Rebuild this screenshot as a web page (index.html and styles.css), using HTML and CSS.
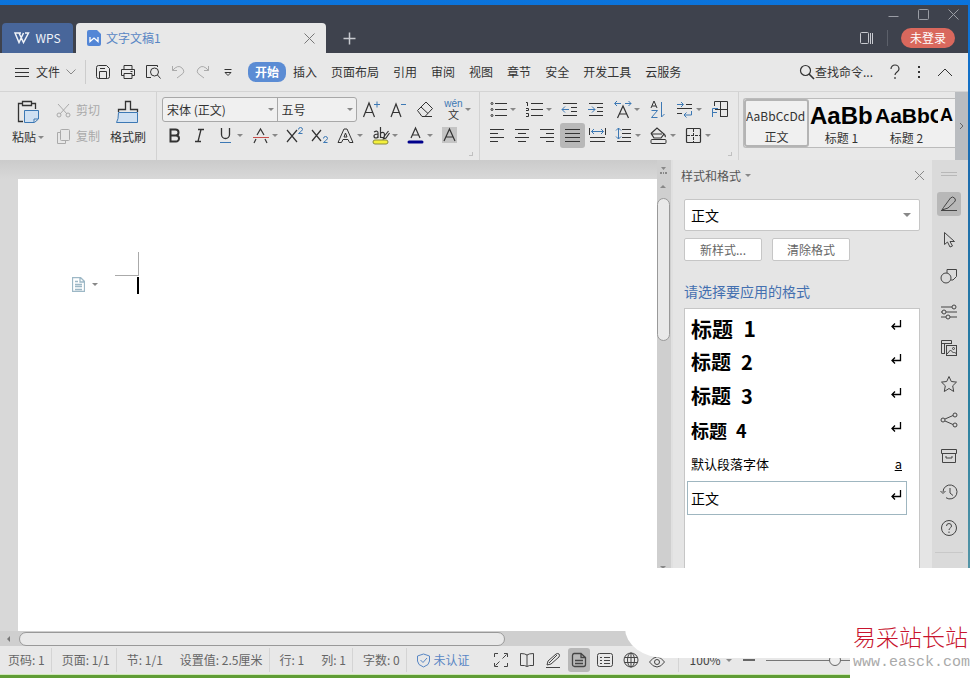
FILE: index.html
```html
<!DOCTYPE html>
<html lang="zh-CN">
<head>
    <meta charset="UTF-8">
    <meta name="viewport" content="width=device-width, initial-scale=1.0">
    <title>文字文稿1 - WPS</title>
    <link rel="stylesheet" href="styles.css">
</head>
<body>
    <div class="window">
        <!-- Title bar -->
        <header class="title-bar">
            <button class="home-tab">
                <svg width="16" height="12" viewBox="0 0 16 12"><path d="M5 1H1l4 9.500L9.500 1M7 1h-2l4.500 9.500L14.500 1H11" stroke-width="1.5"/></svg>
                WPS
            </button>
            <div class="doc-tab">
                <svg width="14" height="16" viewBox="0 0 14 16"><path class="fill-blue" d="M2 0h8l4 4v10a2 2 0 0 1-2 2H2a2 2 0 0 1-2-2V2a2 2 0 0 1 2-2z"/><path class="white" d="M3 7v4.500l4-3.500 4 3.500V7" stroke-width="1.3"/></svg>
                <span>文字文稿1</span>
                <button class="tab-close" aria-label="关闭"><svg width="11" height="11" viewBox="0 0 11 11"><path d="M.5.5l10 10M10.500.5l-10 10"/></svg></button>
            </div>
            <button class="new-tab" aria-label="新建"><svg width="13" height="13" viewBox="0 0 13 13"><path d="M6.500.5v12M.5 6.500h12" stroke-width="1.5"/></svg></button>
            <div class="title-right">
                <div class="window-controls">
                    <button aria-label="最小化"><svg width="11" height="11" viewBox="0 0 11 11"><path d="M.5 7.500h10"/></svg></button>
                    <button aria-label="最大化"><svg width="11" height="11" viewBox="0 0 11 11"><rect x=".5" y=".5" width="10" height="10" rx="1"/></svg></button>
                    <button aria-label="关闭窗口"><svg width="11" height="11" viewBox="0 0 11 11"><path d="M.5.5l10 10M10.500.5l-10 10"/></svg></button>
                </div>
                <div class="account">
                    <button aria-label="标签列表"><svg width="14" height="13" viewBox="0 0 14 13"><rect x=".5" y=".5" width="8" height="11" rx="1"/><path d="M10.500 1v11M12.500 1v11"/></svg></button>
                    <span class="divider"></span>
                    <button class="login">未登录</button>
                </div>
            </div>
        </header>

        <!-- Menu -->
        <nav class="menu-bar">
            <button class="file-menu">
                <svg width="15" height="11" viewBox="0 0 15 11"><path d="M0 1.500h14M0 5.500h14M0 9.500h14"/></svg>
                文件
                <svg class="muted" width="10" height="6" viewBox="0 0 10 6"><path d="M.5.5l4.500 4.500L9.500.5"/></svg>
            </button>
            <div class="quick-tools">
                <button aria-label="保存"><svg width="16" height="16" viewBox="0 0 16 16"><path d="M1.500 3.500a2 2 0 0 1 2-2h8l3 3v8a2 2 0 0 1-2 2h-9a2 2 0 0 1-2-2zM4.500 14V7.500h7V14M5 4.500h5"/></svg></button>
                <button aria-label="打印"><svg width="16" height="16" viewBox="0 0 16 16"><path d="M4 5V1.500h8V5M4 11.500H1.500v-6h13v6H12M4 9.500h8v5H4zM10.500 7.500h2"/></svg></button>
                <button aria-label="打印预览"><svg width="16" height="16" viewBox="0 0 16 16"><path d="M6 13.500H1.500v-12h11V3M4 13.500V13M12.500 11l3 3.500"/><circle cx="9.500" cy="8" r="4"/></svg></button>
                <button class="faded" aria-label="撤销"><svg width="16" height="16" viewBox="0 0 16 16"><path d="M2.500 2v4.500H7M2.500 6.500Q8 0 12 4t-1 7l-4 3"/></svg></button>
                <button class="faded" aria-label="恢复"><svg width="16" height="16" viewBox="0 0 16 16"><path d="M13.500 2v4.500H9M13.500 6.500Q8 0 4 4t1 7l4 3"/></svg></button>
                <button aria-label="更多"><svg width="16" height="16" viewBox="0 0 16 16"><path d="M4.500 5.500h7M5 8.500l3 3 3-3z"/></svg></button>
            </div>
            <a href="#" class="menu-item active">开始</a>
            <a href="#" class="menu-item">插入</a>
            <a href="#" class="menu-item">页面布局</a>
            <a href="#" class="menu-item">引用</a>
            <a href="#" class="menu-item">审阅</a>
            <a href="#" class="menu-item">视图</a>
            <a href="#" class="menu-item">章节</a>
            <a href="#" class="menu-item">安全</a>
            <a href="#" class="menu-item">开发工具</a>
            <a href="#" class="menu-item">云服务</a>
            <div class="menu-right">
                <button class="search"><svg width="16" height="16" viewBox="0 0 16 16"><circle cx="6.500" cy="6.500" r="5" stroke-width="1.2"/><path d="M10 10l5 5" stroke-width="1.6"/></svg>查找命令...</button>
                <button aria-label="帮助"><svg width="12" height="16" viewBox="0 0 12 16"><path d="M2 5a4 4 0 0 1 8 0c0 3-4 3-4 6M6 13v2" stroke-width="1.2"/></svg></button>
                <button aria-label="更多选项"><svg width="4" height="14" viewBox="0 0 4 14"><path d="M2 1v2M2 6v2M2 11v2" stroke-width="2"/></svg></button>
                <button aria-label="收起"><svg width="16" height="9" viewBox="0 0 16 9"><path d="M1 8l7-7 7 7"/></svg></button>
            </div>
        </nav>

        <!-- Ribbon -->
        <section class="ribbon">
            <div class="group clipboard">
                <button class="big-tool">
                    <svg width="24" height="24" viewBox="0 0 24 24"><path d="M6 3.500H2.500v18H7M16 3.500h3.500V9M6.500 1.500h9v4h-9z" stroke-width="1.3"/><path class="blue light-fill" d="M8.500 10.500h14V19l-4 3.500h-10zM22 19h-4v3"/></svg>
                    <span>粘贴<i class="caret"></i></span>
                </button>
                <div class="stack">
                    <button class="faded"><svg width="15" height="15" viewBox="0 0 15 15"><path d="M2 1l9 10M13 1L4 11"/><circle cx="3" cy="12" r="2"/><circle cx="12" cy="12" r="2"/></svg>剪切</button>
                    <button class="faded"><svg width="15" height="15" viewBox="0 0 15 15"><rect x="4.500" y=".5" width="9" height="11" rx="1"/><path d="M4 3.500H1.500v11h8V12"/></svg>复制</button>
                </div>
                <button class="big-tool">
                    <svg width="24" height="24" viewBox="0 0 24 24"><path d="M2.500 12V9.500h7v-8h5v8h7V12" stroke-width="1.3"/><path class="blue light-fill" d="M2.500 12.500h19v10h-21q2-3 2-10z"/></svg>
                    <span>格式刷</span>
                </button>
            </div>

            <div class="group font-group">
                <div class="tool-row wide">
                    <div class="font-selects">
                        <select class="font-name" aria-label="字体"><option>宋体 (正文)</option></select>
                        <select class="font-size" aria-label="字号"><option>五号</option></select>
                    </div>
                    <button class="tool" aria-label="增大字号"><svg viewBox="0 0 19 19"><path d="M1.500 17L7 3l5.500 14M3 12.500h8" stroke-width="1.2"/><path class="blue" d="M12 4.500h6M15 1.500v6"/></svg></button>
                    <button class="tool" aria-label="减小字号"><svg viewBox="0 0 19 19"><path d="M2 17L7 4l5 13M4 12.500h6" stroke-width="1.2"/><path class="blue" d="M12 4.500h5"/></svg></button>
                    <button class="tool" aria-label="清除格式"><svg viewBox="0 0 19 19"><path d="M1.500 10.500L10 2l6.500 6.500-7.500 8H6zM5 7l7 6.500M8 16.500h8"/></svg></button>
                    <button class="tool drop" aria-label="拼音指南"><span class="pinyin"><small>wén</small>文</span><i class="caret"></i></button>
                </div>
                <div class="tool-row">
                    <button class="tool" aria-label="加粗"><svg viewBox="0 0 19 19"><path d="M5.500 3.500h5a3 3 0 0 1 0 6h-5zM5.500 9.500h5.500a3 3 0 0 1 0 6H5.500z" stroke-width="2"/></svg></button>
                    <button class="tool" aria-label="倾斜"><svg viewBox="0 0 19 19"><path d="M8 3.500h6M5 15.500h6M11 3.500l-3 12" stroke-width="1.3"/></svg></button>
                    <button class="tool drop" aria-label="下划线"><svg viewBox="0 0 19 19"><path d="M5.500 2v6.500a4 4 0 0 0 8 0V2" stroke-width="1.3"/><path class="blue" d="M4 16.500h11"/></svg><i class="caret"></i></button>
                    <button class="tool drop" aria-label="删除线"><svg viewBox="0 0 19 19"><path d="M6 9l3.500-6L13 9M5 13l-2 4M14 13l2 4" stroke-width="1.2"/><path class="red" d="M2 11.500h16"/></svg><i class="caret"></i></button>
                    <button class="tool" aria-label="上标"><svg viewBox="0 0 19 19"><path d="M2 4l10 12M12 4L2 16" stroke-width="1.2"/><path class="blue" d="M13.500 3.500q0-2 2-2t2 2q0 1-4 4h4"/></svg></button>
                    <button class="tool" aria-label="下标"><svg viewBox="0 0 19 19"><path d="M2 4l9 11M11 4L2 15" stroke-width="1.2"/><path class="blue" d="M13.500 12.500q0-2 2-2t2 2q0 1-4 4h4"/></svg></button>
                    <button class="tool drop" aria-label="文字效果"><svg viewBox="0 0 19 19"><path d="M8 3h3l6 13.500h-3.500l-1.500-3H7l-1.500 3H2zM8 11l1.500-4 1.500 4z"/></svg><i class="caret"></i></button>
                    <button class="tool drop" aria-label="突出显示"><svg viewBox="0 0 19 19"><path d="M3 6q4-2 4 1v5M7 8q-4 0-4 2t2 2 2-2M9.500 1v11M9.500 7q4-2 4 2t-4 2M17.500 5l-4 5-1 3 2.500-1 3.500-5" stroke-width="1.2"/><rect class="fill-yellow" x="2" y="14" width="15" height="4" rx="2"/></svg><i class="caret"></i></button>
                    <button class="tool drop" aria-label="字体颜色"><svg viewBox="0 0 19 19"><path d="M5 12l4.500-10L14 12M6.500 9h6" stroke-width="1.2"/><path class="navy" d="M3 16h13"/></svg><i class="caret"></i></button>
                    <button class="tool" aria-label="字符底纹"><svg viewBox="0 0 19 19"><path class="fill-shade" d="M2 1h15v16H2z"/><path d="M4 15L9.500 3 15 15M6 11h7" stroke-width="1.2"/></svg></button>
                </div>
                <span class="launcher"></span>
            </div>

            <div class="group paragraph">
                <div class="tool-row narrow">
                    <button class="tool drop" aria-label="项目符号"><svg viewBox="0 0 19 19"><path d="M6 3.500h12M6 9.500h12M6 15.500h12"/><circle cx="3" cy="3.500" r="1"/><circle cx="3" cy="9.500" r="1"/><circle cx="3" cy="15.500" r="1"/></svg><i class="caret"></i></button>
                    <button class="tool drop" aria-label="编号"><svg viewBox="0 0 19 19"><path d="M6 3.500h12M6 9.500h12M6 15.500h12M1 2.500h1.500V6M1 8.500h2.500v2H1M1 13.500h2.500v3H1"/></svg><i class="caret"></i></button>
                    <button class="tool" aria-label="减少缩进"><svg viewBox="0 0 19 19"><path d="M3 3.500h14M11 7.500h6M11 11.500h6M3 15.500h14"/><path class="blue" d="M9 9.500H2M5 6.500l-3 3 3 3"/></svg></button>
                    <button class="tool" aria-label="增加缩进"><svg viewBox="0 0 19 19"><path d="M3 3.500h14M11 7.500h6M11 11.500h6M3 15.500h14"/><path class="blue" d="M2 9.500h7M6 6.500l3 3-3 3"/></svg></button>
                    <button class="tool drop" aria-label="中文版式"><svg viewBox="0 0 19 19"><path d="M4.500 18L10 6l5.500 12M6.500 14h7" stroke-width="1.2"/><path class="blue" d="M8 3.500H2M4 1L1.500 3.500 4 6M12 3.500h6M15.500 1L18 3.500 15.500 6"/></svg><i class="caret"></i></button>
                    <button class="tool" aria-label="排序"><svg viewBox="0 0 19 19"><path d="M3 8l3-7 3 7M4 6h4"/><path class="blue" d="M3.500 10.500h6l-6 7h6M13.500 2v15l3-3"/></svg></button>
                    <button class="tool drop" aria-label="显示段落标记"><svg viewBox="0 0 19 19"><path d="M11 4.500h6M2 8.500h15M2 13.500h5"/><path class="blue" d="M2 4.500h6M6 2l2.500 2.500L6 7M16.500 11v4H9M11.500 12.500L9 15l2.500 2.500"/></svg><i class="caret"></i></button>
                    <button class="tool" aria-label="制表位"><svg viewBox="0 0 19 19"><path d="M4.500 6V1.500h13v15H10M10.500 2v14M5 9.500h12"/><path class="blue" d="M2.500 17V8.500H8M2.500 12.500H7"/></svg></button>
                </div>
                <div class="tool-row">
                    <button class="tool" aria-label="左对齐"><svg viewBox="0 0 19 19"><path d="M2 3.500h14M2 7.500h8M2 11.500h14M2 15.500h8"/></svg></button>
                    <button class="tool" aria-label="居中"><svg viewBox="0 0 19 19"><path d="M2 3.500h14M5 7.500h8M2 11.500h14M5 15.500h8"/></svg></button>
                    <button class="tool" aria-label="右对齐"><svg viewBox="0 0 19 19"><path d="M2 3.500h14M8 7.500h8M2 11.500h14M8 15.500h8"/></svg></button>
                    <button class="tool selected" aria-label="两端对齐"><svg viewBox="0 0 19 19"><path d="M2 3.500h15M2 7.500h15M2 11.500h15M2 15.500h15"/></svg></button>
                    <button class="tool" aria-label="分散对齐"><svg viewBox="0 0 19 19"><path d="M1.500 2v7M17.500 2v7M2 11.500h15M2 15.500h15"/><path class="blue" d="M3.500 5.500h12M6 3L3.500 5.500 6 8M13 3l2.500 2.500L13 8"/></svg></button>
                    <button class="tool drop" aria-label="行距"><svg viewBox="0 0 19 19"><path d="M8 3.500h9M8 7.500h9M8 11.500h9M3 15.500h14"/><path class="blue" d="M4.500 2v11M2 4.500L4.500 2 7 4.500M2 10.500L4.500 13 7 10.500"/></svg><i class="caret"></i></button>
                    <button class="tool drop" aria-label="底纹颜色"><svg viewBox="0 0 19 19"><path d="M2 7.500L8 2l7 6-3 4H5L2.500 8H13M15 8q2 2 1 3" stroke-width="1.2"/><rect x="2" y="13.500" width="15" height="4" rx="1"/></svg><i class="caret"></i></button>
                    <button class="tool drop" aria-label="边框"><svg viewBox="0 0 19 19"><rect x="2.500" y="2.500" width="14" height="14" rx="1" stroke-width="1.2"/><path d="M9.500 3v13M3 9.500h13" stroke-dasharray="3 1"/></svg><i class="caret"></i></button>
                </div>
                <span class="launcher"></span>
            </div>

            <div class="gallery">
                <button class="style-card current"><span class="sample">AaBbCcDd</span><span>正文</span></button>
                <button class="style-card"><span class="sample h1">AaBb</span><span>标题 1</span></button>
                <button class="style-card"><span class="sample h2">AaBbC</span><span>标题 2</span></button>
                <button class="style-card"><span class="sample h3">A</span></button>
            </div>
            <button class="ribbon-next" aria-label="向右滚动"><svg width="5" height="8" viewBox="0 0 5 8"><path d="M1 1l3 3-3 3"/></svg></button>
        </section>

        <!-- Document and side panels -->
        <main class="workspace">
            <div class="editor">
                <div class="canvas">
                    <article class="page">
                        <button class="paste-options" aria-label="段落布局">
                            <svg width="13" height="15" viewBox="0 0 13 15"><path d="M.5.5h8l4 4v10H.5zM8 1v4h4M3 4.500h3M3 7.500h7M3 9.500h7M3 12.500h7" stroke-width="1.3"/></svg>
                            <i class="caret"></i>
                        </button>
                        <div class="insertion">
                            <span class="corner"></span>
                            <span class="cursor"></span>
                        </div>
                    </article>
                </div>
                <div class="v-scroll">
                    <svg width="9" height="9" viewBox="0 0 9 9"><path class="fill-grey" d="M2 1h5L4.500 4zM1 6h2v2H1zM4 6h1v2H4zM6 6h2v2H6z"/></svg>
                    <i class="caret up"></i>
                    <span class="v-thumb"></span>
                    <i class="caret"></i>
                </div>
                <div class="h-scroll">
                    <i class="caret left"></i>
                    <span class="h-thumb"></span>
                </div>
            </div>

            <aside class="style-panel">
                <header class="panel-header">
                    <h2>样式和格式<i class="caret"></i></h2>
                    <button class="muted" aria-label="关闭面板"><svg width="11" height="11" viewBox="0 0 11 11"><path d="M1 1l9 9M10 1l-9 9"/></svg></button>
                </header>
                <div class="panel-body">
                    <select class="current-style" aria-label="当前样式"><option>正文</option></select>
                    <div class="panel-actions">
                        <button>新样式...</button>
                        <button>清除格式</button>
                    </div>
                    <h3>请选择要应用的格式</h3>
                    <ul class="style-list">
                        <li class="level-1"><span>标题&ensp;1</span><svg class="return" viewBox="0 0 11 10"><path d="M9.500 0v6.500H1M4 3.500l-3 3 3 3"/></svg></li>
                        <li class="level-2"><span>标题&ensp;2</span><svg class="return" viewBox="0 0 11 10"><path d="M9.500 0v6.500H1M4 3.500l-3 3 3 3"/></svg></li>
                        <li class="level-2"><span>标题&ensp;3</span><svg class="return" viewBox="0 0 11 10"><path d="M9.500 0v6.500H1M4 3.500l-3 3 3 3"/></svg></li>
                        <li class="level-3"><span>标题&ensp;4</span><svg class="return" viewBox="0 0 11 10"><path d="M9.500 0v6.500H1M4 3.500l-3 3 3 3"/></svg></li>
                        <li class="char-style"><span>默认段落字体</span><u>a</u></li>
                        <li class="chosen"><span>正文</span><svg class="return" viewBox="0 0 11 10"><path d="M9.500 0v6.500H1M4 3.500l-3 3 3 3"/></svg></li>
                    </ul>
                </div>
            </aside>

            <nav class="side-bar">
                <span class="grip"></span>
                <button class="selected" aria-label="样式"><svg viewBox="0 0 18 18"><path d="M1 15.500h16M3.500 12.500l7-9.500q2-2 4 0t0 4L8 13l-6 2z"/></svg></button>
                <button aria-label="选择"><svg viewBox="0 0 18 18"><path d="M4.500 1.500v12l3-2.500 2.500 5 2.500-1L10 10.500h4.500z"/></svg></button>
                <button aria-label="形状"><svg viewBox="0 0 18 18"><circle cx="6" cy="11" r="5"/><path d="M7 6V2.500h9.500v7L13 13h-2"/></svg></button>
                <button aria-label="属性"><svg viewBox="0 0 18 18"><path d="M1 4h11M6 9h11M1 9h1M1 14h5M10 14h7"/><circle cx="14" cy="4" r="2"/><circle cx="4" cy="9" r="2"/><circle cx="8" cy="14" r="2"/></svg></button>
                <button aria-label="图库"><svg viewBox="0 0 18 18"><path d="M5 14.500H1.500v-13h10V5M1.500 4.500h10M4.500 5v9"/><rect x="6.500" y="6.500" width="10" height="10"/><path d="M7 15l3.500-4 3 3 1-1 2 2"/><circle cx="13.500" cy="9.500" r="1"/></svg></button>
                <button aria-label="收藏"><svg viewBox="0 0 18 18"><path d="M9 1.500l2.300 5 5.200.6-3.800 3.700 1 5.700L9 13.500l-4.700 3 1-5.700L1.500 7.100l5.200-.6z"/></svg></button>
                <button aria-label="分享"><svg viewBox="0 0 18 18"><circle cx="3" cy="9" r="2"/><circle cx="15" cy="4" r="2"/><circle cx="15" cy="14" r="2"/><path d="M5 8l8-3.500M5 10l8 3.500"/></svg></button>
                <button aria-label="归档"><svg viewBox="0 0 18 18"><path d="M1.500 2.500h15v4h-15zM2.500 6.500v9h13v-9M6 9v2h6V9"/></svg></button>
                <button aria-label="历史"><svg viewBox="0 0 18 18"><path d="M3 9a7 7 0 1 1 3 5.700M.5 8L3 10.500 5.500 8M10 5v5l3 2.500"/></svg></button>
                <button aria-label="帮助中心"><svg viewBox="0 0 18 18"><circle cx="9" cy="9" r="7.500"/><path d="M6.500 7a2.500 2.500 0 0 1 5 0c0 2-2.500 2-2.500 4M9 12.500v1.500"/></svg></button>
                <span class="side-line"></span>
            </nav>
        </main>

        <!-- Status bar -->
        <footer class="status-bar">
            <span class="status-item ruled">页码: 1</span>
            <span class="status-item ruled">页面: 1/1</span>
            <span class="status-item">节: 1/1</span>
            <span class="status-item ruled">设置值: 2.5厘米</span>
            <span class="status-item">行: 1</span>
            <span class="status-item ruled">列: 1</span>
            <span class="status-item ruled">字数: 0</span>
            <a href="#" class="verify"><svg width="13" height="15" viewBox="0 0 13 15"><path d="M6.500 1l6 2v5q0 4-6 6-6-2-6-6V3zM3.500 7l2.500 2.500L10 5"/></svg>未认证</a>
            <div class="views">
                <button aria-label="全屏"><svg viewBox="0 0 16 16"><path d="M1.500 5V1.500H5M11 1.500h3.500V5M14.500 11v3.500H11M5 14.500H1.500V11M9.500 6.500l4-4M6.500 9.500l-4 4"/></svg></button>
                <button aria-label="阅读版式"><svg viewBox="0 0 16 16"><path d="M8 3v11.500M8 3Q6 1.500 1.500 1.500v12Q6 13 8 14.500q2-1.500 6.500-1v-12Q10 1.500 8 3"/></svg></button>
                <button aria-label="写作模式"><svg viewBox="0 0 16 16"><path d="M1 15.500h14M2 13l1-4 8-7q2-1 3 0t0 3l-8 7zM4 11l8-8"/></svg></button>
                <button class="selected" aria-label="页面视图"><svg viewBox="0 0 16 16"><path d="M3 1.500h7l4.500 4v7a2 2 0 0 1-2 2h-9a2 2 0 0 1-2-2v-9a2 2 0 0 1 1.500-2zM10 2v3.500h4M4 8.500h8M4 11.500h8" stroke-width="1.3"/></svg></button>
                <button aria-label="大纲"><svg viewBox="0 0 16 16"><rect x=".5" y="1.500" width="15" height="13" rx="2"/><path d="M3 5.500h2M3 8.500h2M3 11.500h2M7 5.500h6M7 8.500h6M7 11.500h6"/></svg></button>
                <button aria-label="Web版式"><svg viewBox="0 0 16 16"><circle cx="8" cy="8" r="7"/><ellipse cx="8" cy="8" rx="3.500" ry="7"/><path d="M1.500 5.500h13M1.500 10.500h13M8 1v14"/></svg></button>
                <button aria-label="护眼模式"><svg viewBox="0 0 16 16"><path d="M.5 10Q4 5 8 5t7.500 5q-3.500 5-7.500 5T.5 10z"/><circle cx="8" cy="10" r="2.500"/></svg></button>
            </div>
            <button class="zoom-value">100%<i class="caret"></i></button>
            <button class="zoom-out" aria-label="缩小"></button>
            <input class="zoom-slider" type="range" min="0" max="100" value="50" aria-label="显示比例">
        </footer>
    </div>

    <!-- Site mark laid over the lower right corner -->
    <div class="cover"></div>
    <div class="site-mark">
        <strong>易采站长站</strong>
        <span>www.easck.com</span>
    </div>
</body>
</html>
```
FILE: styles.css
```css
/* General Reset */
* {
    margin: 0;
    padding: 0;
    box-sizing: border-box;
}

body {
    position: relative;
    height: 100vh;
    padding: 5px 2px 3px 0;
    overflow: hidden;
    font-family: "Noto Sans CJK SC", sans-serif;
    font-size: 12px;
    line-height: 16px;
    color: #333;
    background: linear-gradient(#0b74dc 0, #1c6cae 25%, #2a80a0 60%, #5f9aa8 90%, #5f9c35 98%);
}

button, select, input {
    font: inherit;
    color: inherit;
    background: none;
    border: none;
}

button {
    display: flex;
    align-items: center;
    justify-content: center;
    white-space: nowrap;
}

a {
    color: inherit;
    text-decoration: none;
}

svg {
    flex: none;
    fill: none;
    stroke: currentColor;
}

/* Icon colours */
.blue {
    stroke: #3c78b4;
}

.light-fill {
    fill: #cfe0f2;
}

.red {
    stroke: #c8504c;
}

.white {
    stroke: #fff;
}

.navy {
    stroke: #00008b;
    stroke-width: 3;
    stroke-linecap: round;
}

.fill-blue {
    fill: #5386d6;
    stroke: none;
}

.fill-yellow {
    fill: #f4f03c;
    stroke: #8a8a3a;
}

.fill-shade {
    fill: #c4c4c4;
    stroke: none;
}

.fill-grey {
    fill: #888;
    stroke: none;
}

.faded {
    color: #aaa;
}

.muted {
    color: #888;
}

.selected {
    background: #b8b8b8;
    border-radius: 3px;
}

.caret {
    flex: none;
    width: 0;
    height: 0;
    border: 3px solid transparent;
    border-top-color: #888;
    border-bottom: none;
}

.caret.up {
    border: 3px solid transparent;
    border-bottom-color: #888;
    border-top: none;
}

.caret.left {
    border: 3px solid transparent;
    border-right-color: #777;
    border-left: none;
}

.window {
    display: flex;
    flex-direction: column;
    height: 100%;
    background: #e8e8e8;
}

/* Title bar */
.title-bar {
    display: flex;
    align-items: flex-end;
    height: 48px;
    padding-left: 2px;
    gap: 3px;
    background: #3e424d;
    color: #c8cad0;
}

.home-tab {
    width: 71px;
    height: 30px;
    gap: 5px;
    font-size: 12px;
    color: #f0f3f8;
    background: #48669a;
    border-radius: 4px 4px 0 0;
}

.doc-tab {
    display: flex;
    align-items: center;
    width: 250px;
    height: 30px;
    padding: 0 11px;
    gap: 5px;
    color: #5886c4;
    background: #e8e8e8;
    border-radius: 4px 4px 0 0;
}

.tab-close {
    margin-left: auto;
    color: #777;
}

.new-tab {
    width: 40px;
    height: 30px;
}

.title-right {
    display: flex;
    flex-direction: column;
    align-items: flex-end;
    align-self: stretch;
    gap: 8px;
    margin-left: auto;
    padding-top: 4px;
}

.window-controls {
    display: flex;
    gap: 19px;
    padding-right: 9px;
    color: #9a9da5;
}

.account {
    display: flex;
    align-items: center;
    gap: 13px;
    padding-right: 13px;
}

.divider {
    width: 1px;
    height: 16px;
    background: #5c606a;
}

.login {
    height: 20px;
    padding: 0 9px;
    color: #fff;
    background: #d9685d;
    border-radius: 10px;
}

/* Menu */
.menu-bar {
    display: flex;
    align-items: center;
    height: 39px;
    padding: 0 15px;
    white-space: nowrap;
    border-bottom: 1px solid #d4d4d4;
}

.file-menu {
    gap: 6px;
}

.quick-tools {
    display: flex;
    align-items: center;
    height: 24px;
    gap: 9px;
    margin: 0 12px 0 9px;
    padding-left: 9px;
    border-left: 1px solid #ccc;
}

.menu-item {
    margin-right: 14px;
}

.menu-item.active {
    margin-right: 7px;
    padding: 2px 7px;
    font-weight: bold;
    color: #fff;
    background: #5b8cd4;
    border-radius: 8px;
}

.menu-right {
    display: flex;
    align-items: center;
    gap: 16px;
    margin-left: auto;
}

/* Ribbon */
.ribbon {
    display: flex;
    height: 68px;
}

.group {
    position: relative;
    flex: none;
    padding: 5px 4px 0 5px;
    border-right: 1px solid #d2d2d2;
}

.clipboard {
    display: flex;
    align-items: flex-start;
    width: 157px;
    padding: 8px 8px 0 8px;
    gap: 8px;
}

.big-tool {
    flex-direction: column;
    gap: 5px;
    width: 40px;
}

.big-tool span {
    display: flex;
    align-items: center;
    gap: 2px;
}

.stack {
    display: flex;
    flex-direction: column;
    gap: 10px;
    padding-top: 2px;
}

.stack button {
    gap: 5px;
}

.font-group {
    width: 323px;
}

.paragraph {
    width: 259px;
}

.tool-row {
    display: flex;
    align-items: flex-start;
    height: 26px;
}

.tool-row.narrow {
    gap: 1px;
}

.tool-row.wide {
    gap: 2px;
}

.tool {
    flex: none;
    width: 25px;
    height: 25px;
}

.tool svg {
    width: 19px;
    height: 19px;
}

.tool.drop {
    width: 35px;
    gap: 2px;
}

/* Corner mark that opens a group's dialog */
.launcher {
    position: absolute;
    right: 6px;
    bottom: 4px;
    width: 4px;
    height: 4px;
    border: 1px solid #c0c0c0;
    border-top: none;
    border-left: none;
}

.pinyin {
    display: flex;
    flex-direction: column;
    width: 19px;
    align-items: center;
    font-size: 11px;
    line-height: 12px;
}

.pinyin small {
    font-family: "Liberation Sans", sans-serif;
    font-size: 10px;
    line-height: 9px;
    color: #3c78b4;
}

.font-selects {
    display: flex;
    flex: 1;
    height: 25px;
    background: #f0f0f0;
    border: 1px solid #a8a8a8;
    border-radius: 3px;
}

select {
    appearance: none;
    padding: 0 4px;
    background: url("data:image/svg+xml,%3Csvg xmlns='http://www.w3.org/2000/svg' width='6' height='3'%3E%3Cpath d='M0 0h6L3 3z' fill='%23888'/%3E%3C/svg%3E") no-repeat right 3px center;
}

.font-name {
    flex: 3;
    border-right: 1px solid #a8a8a8;
}

.font-size {
    flex: 2;
}

.gallery {
    display: flex;
    flex: 1;
    min-width: 0;
    height: 50px;
    margin: 6px 0 0 4px;
    overflow: hidden;
    background: #f0f0f0;
    border: 1px solid #bbb;
    border-right: none;
    border-radius: 3px 0 0 3px;
}

.style-card {
    flex: none;
    flex-direction: column;
    width: 65px;
    padding: 0 1px;
    overflow: hidden;
}

.style-card.current {
    border: 2px solid #b4b4b4;
    border-radius: 3px;
    padding: 0;
}

.sample {
    width: 100%;
    height: 29px;
    overflow: hidden;
    font-size: 12px;
    line-height: 29px;
    text-align: left;
}

.sample.h1, .sample.h2, .sample.h3 {
    font-family: "Liberation Sans", sans-serif;
    font-weight: bold;
    color: #000;
}

.sample.h1 {
    font-size: 24px;
}

.sample.h2 {
    font-size: 21px;
}

.sample.h3 {
    height: 45px;
    font-size: 18px;
}

.ribbon-next {
    flex: none;
    width: 13px;
    color: #666;
    background: #b9bcc0;
}

/* Document */
.workspace {
    display: flex;
    flex: 1;
    min-height: 0;
}

.editor {
    display: grid;
    grid-template: 1fr 15px / 1fr 16px;
    flex: 1;
    min-width: 0;
    background: #cfcfcf;
}

.canvas {
    padding: 19px 0 0 18px;
    background: linear-gradient(#cbcbcb, #d8d8d8 19px);
}

.page {
    display: flex;
    align-items: flex-start;
    height: 100%;
    padding: 73px 0 0 54px;
    gap: 17px;
    background: #fff;
}

.paste-options {
    gap: 7px;
    height: 65px;
    color: #9db8c6;
}

.insertion {
    display: flex;
    flex-direction: column;
    align-items: flex-end;
    gap: 1px;
}

.corner {
    width: 24px;
    height: 24px;
    border: 1px solid #aaa;
    border-top: none;
    border-left: none;
}

.cursor {
    width: 2px;
    height: 17px;
    background: #000;
}

.v-scroll {
    display: flex;
    flex-direction: column;
    align-items: center;
    padding: 6px 2px 62px 0;
    gap: 10px;
    border-right: 2px solid #e0e0e0;
}

.v-thumb {
    width: 13px;
    height: 143px;
    margin-bottom: auto;
    background: #e9e9e9;
    border: 1px solid #999;
    border-radius: 7px;
}

.h-scroll {
    display: flex;
    grid-column: 1 / 3;
    align-items: center;
    padding-left: 7px;
    gap: 9px;
}

.h-thumb {
    width: 73%;
    height: 14px;
    background: #e9e9e9;
    border: 1px solid #999;
    border-radius: 7px;
}

/* Style panel */
.style-panel {
    flex: none;
    width: 259px;
    background: #e5e5e5;
}

.panel-header {
    display: flex;
    align-items: center;
    justify-content: space-between;
    height: 31px;
    padding: 0 7px 0 8px;
    color: #555;
}

.panel-header h2 {
    display: flex;
    align-items: center;
    gap: 4px;
    font-size: 12px;
    font-weight: normal;
}

.panel-body {
    padding: 8px 12px 0 11px;
}

.current-style {
    width: 100%;
    height: 32px;
    padding: 0 6px;
    font-size: 14px;
    color: #000;
    background-color: #fff;
    background-position: right 8px center;
    background-size: 8px 4px;
    border: 1px solid #c6c6c6;
    border-radius: 2px;
}

.panel-actions {
    display: flex;
    gap: 10px;
    padding: 7px 0 20px;
}

.panel-actions button {
    width: 78px;
    height: 23px;
    color: #666;
    background: #fff;
    border: 1px solid #c6c6c6;
    border-radius: 2px;
}

.panel-body h3 {
    font-size: 14px;
    line-height: 20px;
    font-weight: normal;
    color: #4470b0;
}

.style-list {
    height: 300px;
    margin-top: 7px;
    padding: 2px 12px 0 2px;
    list-style: none;
    color: #000;
    background: #fff;
    border: 1px solid #c6c6c6;
}

.style-list li {
    display: flex;
    align-items: center;
    justify-content: space-between;
    height: 34px;
    padding: 0 4px 0 3px;
    font-size: 14px;
    border: 1px solid transparent;
}

.style-list .level-1 {
    font-size: 21px;
    font-weight: bold;
}

.style-list .level-2 {
    font-size: 20px;
    font-weight: bold;
}

.style-list .level-3 {
    font-size: 18px;
    font-weight: bold;
}

.style-list .char-style {
    font-size: 13px;
}

.style-list .chosen {
    border-color: #9fb6c0;
}

.return {
    width: 11px;
    height: 10px;
    margin-bottom: 6px;
    stroke-width: 1.3;
}

/* Side bar */
.side-bar {
    display: flex;
    flex-direction: column;
    flex: none;
    align-items: center;
    width: 36px;
    padding: 12px 2px 0 0;
    gap: 12px;
    color: #444;
    background: #dadada;
}

.side-bar button {
    flex: none;
    width: 24px;
    height: 24px;
}

.side-bar svg {
    width: 18px;
    height: 18px;
}

.grip {
    flex: none;
    width: 16px;
    height: 4px;
    margin-bottom: 4px;
    border: 1px solid #b8b8b8;
    border-left: none;
    border-right: none;
}

.side-line {
    width: 28px;
    border-top: 1px solid #c8c8c8;
}

/* Status bar */
.status-bar {
    display: flex;
    align-items: center;
    height: 29px;
    padding-left: 8px;
    white-space: nowrap;
    overflow: hidden;
    color: #666;
    border-bottom: 1px solid #cfe8b8;
}

.status-item {
    margin-right: 10px;
    padding-right: 6px;
    line-height: 24px;
    border-right: 1px solid transparent;
}

.status-item.ruled {
    border-color: #d4d4d4;
}

.verify {
    display: flex;
    align-items: center;
    gap: 4px;
    color: #5886c4;
}

.views {
    display: flex;
    gap: 4px;
    margin-left: 20px;
    padding-right: 10px;
    color: #444;
    border-right: 1px solid #d4d4d4;
}

.views button {
    width: 22px;
    height: 24px;
}

.views svg {
    width: 16px;
    height: 16px;
}

.zoom-value {
    gap: 5px;
    margin: 0 11px;
    color: #444;
}

.zoom-out {
    width: 12px;
    height: 2px;
    background: #666;
}

.zoom-slider {
    appearance: none;
    width: 138px;
    height: 1px;
    margin-left: 11px;
    background: #777;
}

.zoom-slider::-webkit-slider-thumb {
    appearance: none;
    width: 12px;
    height: 12px;
    background: #eee;
    border: 1px solid #666;
    border-radius: 50%;
}

/* Site mark */
.cover {
    position: absolute;
    right: 0;
    bottom: 20px;
    width: 345px;
    height: 90px;
    background: #fff;
    border-bottom-left-radius: 40px 30px;
}

.site-mark {
    position: absolute;
    right: 0;
    bottom: 0;
    display: flex;
    flex-direction: column;
    width: 120px;
    padding: 0 0 5px 3px;
    background: #fff;
}

.site-mark strong {
    font-size: 23px;
    line-height: 34px;
    font-weight: 300;
    color: #c8142e;
}

.site-mark span {
    font-family: "Liberation Mono", monospace;
    font-size: 15px;
    line-height: 20px;
    color: #aaa;
}
```
